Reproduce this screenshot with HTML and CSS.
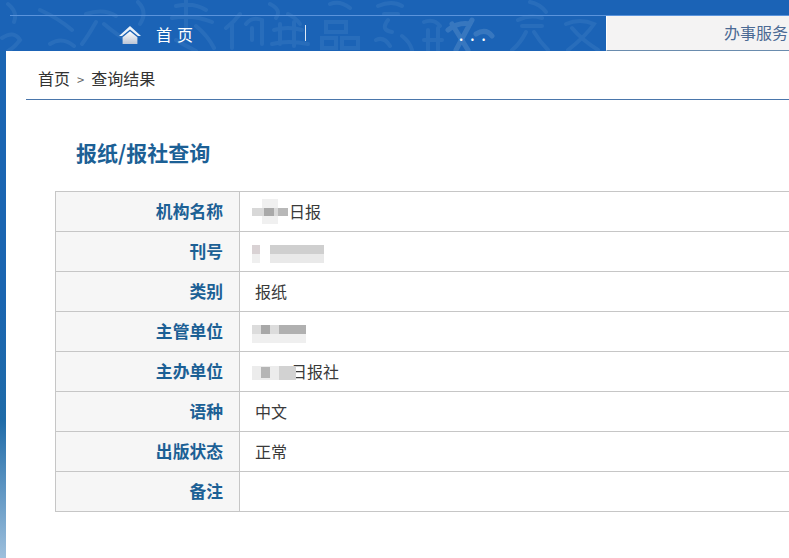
FILE: index.html
```html
<!DOCTYPE html>
<html lang="zh-CN">
<head>
<meta charset="utf-8">
<title>报纸/报社查询</title>
<link rel="stylesheet" href="styles.css">
</head>
<body>
<div class="page">
  <header class="head">
    <svg class="texture" viewBox="0 0 606 51" width="606" height="51" aria-hidden="true">
      <path d="M8 4 Q18 12 14 22 M2 38 Q14 30 20 40 Q14 48 8 51 M40 10 Q58 18 72 30 M50 44 Q62 36 74 46"/>
      <path d="M86 14 Q104 8 116 16 M96 22 Q88 36 82 44 M104 24 Q118 36 130 42 M138 2 Q148 12 140 24"/>
      <path d="M176 6 Q194 2 206 10 M186 0 V30 M172 18 Q192 14 212 22 M196 26 Q208 36 214 48 M176 40 Q186 46 196 51"/>
      <path d="M226 28 Q234 22 240 14 M232 24 V48 M246 24 Q252 16 262 20 V44 M252 28 V40 M270 4 Q282 10 276 18"/>
      <path d="M274 30 Q288 26 302 30 M280 24 V44 M294 22 V46 M272 44 Q288 40 308 44 M288 14 Q296 18 300 24"/>
      <path d="M326 22 H346 V32 H326 Z M322 38 H336 V48 H322 Z M342 38 H358 V48 H342 Z M330 4 Q340 0 350 8"/>
      <path d="M378 6 Q392 0 402 6 M384 14 H398 M388 20 Q380 30 392 32 M376 40 Q384 36 390 46 M402 36 Q410 42 412 50"/>
      <path d="M424 22 Q434 18 440 26 M428 30 V50 M438 28 V50 M424 40 H442"/>
      <path d="M448 30 Q458 22 470 24 M452 24 L468 50 M472 20 L456 50 M476 34 Q486 28 492 36" class="pale"/>
      <path d="M518 20 Q530 14 542 18 M522 26 H542 M526 32 Q520 44 512 50 M534 32 Q540 42 548 50 M530 2 Q540 4 546 12"/>
      <path d="M566 24 Q580 18 594 24 Q586 36 568 50 M572 28 Q582 40 598 50"/>
    </svg>
    <div class="topline"></div>
    <nav class="nav">
      <a class="home">
        <svg class="home-icon" viewBox="0 0 22 18" width="22" height="18">
          <defs><linearGradient id="hg" x1="0" y1="0" x2="0" y2="1"><stop offset="0" stop-color="#ffffff"/><stop offset="1" stop-color="#bcc6d6"/></linearGradient></defs>
          <path d="M11 0 L22 10 L19 10 L11 3.4 L3 10 L0 10 Z" fill="#eaf2fa"/>
          <path d="M11 5.2 L18.4 11.2 V18 H3.6 V11.2 Z" fill="url(#hg)"/>
        </svg>
        <span class="home-text">首 页</span>
      </a>
      <i class="sep"></i>
      <span class="dots">...</span>
      <a class="tab">办事服务</a>
    </nav>
  </header>
  <main class="content">
    <div class="crumb"><span>首页</span><span class="gt">&gt;</span><span>查询结果</span></div>
    <h1 class="title">报纸/报社查询</h1>
    <table class="info">
      <tr><th>机构名称</th><td><div class="val"><span class="blur b-a"></span><span class="after-a">日报</span></div></td></tr>
      <tr><th>刊号</th><td><div class="val"><span class="blur b-b"></span></div></td></tr>
      <tr><th>类别</th><td>报纸</td></tr>
      <tr><th>主管单位</th><td><div class="val"><span class="blur b-c"></span></div></td></tr>
      <tr><th>主办单位</th><td><div class="val"><span class="blur b-d"></span><span class="after-d">日报社</span></div></td></tr>
      <tr><th>语种</th><td>中文</td></tr>
      <tr><th>出版状态</th><td>正常</td></tr>
      <tr><th>备注</th><td></td></tr>
    </table>
  </main>
</div>
</body>
</html>
```
FILE: styles.css
```css
* { box-sizing: border-box; }
html, body { margin: 0; padding: 0; height: 100%; overflow: hidden; }
body {
  font-family: "Noto Sans CJK SC", "Liberation Sans", sans-serif;
  background: linear-gradient(180deg, #1a65b4 0, #1a65b0 300px, #1f6ba8 420px, #9dbfdc 558px);
}
.page { width: 789px; height: 558px; display: flex; flex-direction: column; overflow: hidden; }

.head { position: relative; height: 51px; flex: none; background: #1b63b6; overflow: hidden; }
.texture { position: absolute; left: 0; top: 0; fill: none; stroke: #4f8bca; stroke-width: 4; stroke-linecap: round; opacity: .25; filter: blur(.7px); }
.texture .pale { stroke: #8db4dc; stroke-width: 5; }
.topline { position: absolute; left: 10px; right: 0; top: 15px; height: 1px; background: #5b94dc; }

.nav { position: relative; height: 51px; padding-top: 16px; display: flex; align-items: stretch; }
.home { width: 305px; padding-left: 119px; display: flex; align-items: center; gap: 15px; color: #fff; font-size: 16px; flex: none; }
.home-icon { flex: none; margin-top: 2px; }
.home-text { white-space: pre; word-spacing: 1.5px; }
.sep { width: 1px; height: 16px; margin-top: 9px; background: #dfe9f5; flex: none; }
.dots { width: 300px; padding-left: 153px; color: #fff; font-size: 13px; font-weight: 700; letter-spacing: 7px; line-height: 39px; white-space: pre; flex: none; }
.tab { flex: 1; background: #f4f3f3; border-bottom: 1px solid #6a8cae; color: #4b6a94; font-size: 16px; line-height: 33px; text-align: right; white-space: nowrap; padding-right: 1px; border-left: 1px solid #fff; }

.content { flex: 1; margin-left: 6px; background: #fff; padding-top: 14px; min-width: 0; overflow: hidden; }
.crumb { margin-left: 20px; height: 35px; padding-left: 12px; border-bottom: 1px solid #4a76ab; color: #333; font-size: 16px; line-height: 27px; display: flex; }
.gt { font-size: 13px; color: #666; margin: 0 7px 0 7px; padding-top: 1px; }
.title { margin: 37px 0 0 70px; color: #1c6095; font-size: 21px; font-weight: 700; line-height: 30px; }

.info { margin: 24px 0 0 49px; width: 760px; border-collapse: collapse; table-layout: fixed; font-size: 16px; }
.info th, .info td { height: 40px; border: 1px solid #c6c6c6; padding: 0 0 2px; }
.info th { width: 184px; background: #f6f6f6; color: #1c6095; font-size: 16.8px; text-align: right; padding-right: 16px; font-weight: 700; }
.info td { padding-left: 15px; color: #3a3a3a; }
.val { display: flex; align-items: center; height: 37px; }

.blur { display: block; flex: none; position: relative; z-index: 1; filter: blur(.6px); }
.b-a { width: 36px; height: 25px; margin: 2px 0 0 -3px; background:
  linear-gradient(#a9a9a9, #a9a9a9) 12px 9px / 10px 8px no-repeat,
  linear-gradient(#b8b8b8, #b8b8b8) 26px 9px / 10px 8px no-repeat,
  linear-gradient(#d8d8d8, #d8d8d8) 0 9px / 36px 8px no-repeat,
  linear-gradient(#f0f0f0, #f0f0f0) 10px 0 / 16px 25px no-repeat; }
.after-a { margin-left: 1px; }
.b-b { width: 72px; height: 18px; margin: 7px 0 0 -3px; background:
  linear-gradient(#d9d2d4, #d9d2d4) 0 0 / 8px 9px no-repeat,
  linear-gradient(#efefef, #efefef) 0 9px / 8px 9px no-repeat,
  linear-gradient(#cfcfcf, #cfcfcf) 18px 0 / 54px 9px no-repeat,
  linear-gradient(#e9e9e9, #e9e9e9) 18px 9px / 54px 9px no-repeat; }
.b-c { width: 54px; height: 18px; margin: 7px 0 0 -3px; background:
  linear-gradient(#a8a8a8, #a8a8a8) 9px 0 / 9px 9px no-repeat,
  linear-gradient(#b0b0b0, #b0b0b0) 27px 0 / 27px 9px no-repeat,
  linear-gradient(#dcdcdc, #dcdcdc) 0 0 / 54px 9px no-repeat,
  linear-gradient(#efefef, #efefef) 0 9px / 54px 9px no-repeat; }
.b-d { width: 44px; height: 16px; margin: 2px 0 0 -3px; background:
  linear-gradient(#b5b5b5, #b5b5b5) 9px 3px / 9px 11px no-repeat,
  linear-gradient(#d2d2d2, #d2d2d2) 27px 2px / 17px 14px no-repeat,
  linear-gradient(#ececec, #ececec) 0 2px / 44px 14px no-repeat; }
.after-d { margin-left: -5px; }
```
